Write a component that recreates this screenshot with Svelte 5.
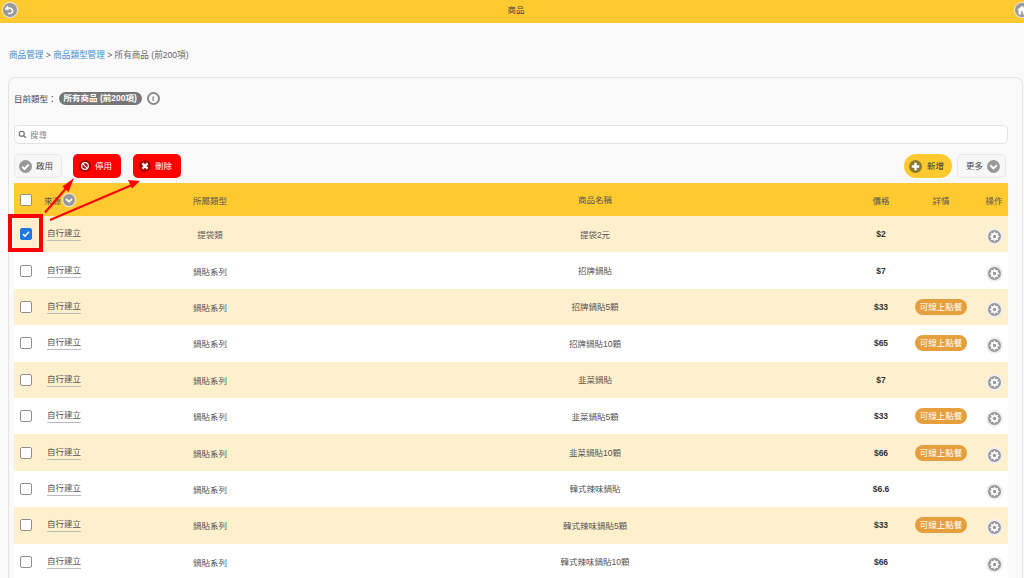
<script>
  const rows = [
    { type: '提袋類', name: '提袋2元', price: '$2', checked: true },
    { type: '鍋貼系列', name: '招牌鍋貼', price: '$7' },
    { type: '鍋貼系列', name: '招牌鍋貼5顆', price: '$33', online: true },
    { type: '鍋貼系列', name: '招牌鍋貼10顆', price: '$65', online: true },
    { type: '鍋貼系列', name: '韭菜鍋貼', price: '$7' },
    { type: '鍋貼系列', name: '韭菜鍋貼5顆', price: '$33', online: true },
    { type: '鍋貼系列', name: '韭菜鍋貼10顆', price: '$66', online: true },
    { type: '鍋貼系列', name: '韓式辣味鍋貼', price: '$6.6' },
    { type: '鍋貼系列', name: '韓式辣味鍋貼5顆', price: '$33', online: true },
    { type: '鍋貼系列', name: '韓式辣味鍋貼10顆', price: '$66' }
  ];
</script>

<div class="page">
  <header class="topbar">
    <button class="nav" aria-label="返回">
      <svg viewBox="0 0 16 16"><path d="M5.4 3.8 3.4 6.6l3 1.2M3.8 6.5c3-1.5 7-.6 7.2 2.4.2 2.5-2.4 3.6-5 2.8" fill="none" stroke="#fff" stroke-width="1.8" /></svg>
    </button>
    <span class="title">商品</span>
    <button class="nav" aria-label="首頁">
      <svg viewBox="0 0 16 16"><path d="M8 3 2.5 8H4v5h3V9.5h2V13h3V8h1.5z" fill="#fff" /></svg>
    </button>
  </header>

  <nav class="crumbs">
    <a href="#a">商品管理</a> &gt; <a href="#b">商品類型管理</a> &gt; 所有商品 (前200項)
  </nav>

  <main class="card">
    <div class="current">
      目前類型：<span class="pill">所有商品 (前200項)</span>
      <span class="info">i</span>
    </div>

    <div class="search">
      <svg viewBox="0 0 12 12"><circle cx="5" cy="5" r="3.4" fill="none" stroke="#666" stroke-width="1.4" /><path d="m7.6 7.6 3 3" stroke="#666" stroke-width="1.6" /></svg>
      <span class="hint">搜尋</span>
    </div>

    <div class="toolbar">
      <button class="btn plain">
        <span class="dot grey"><svg viewBox="0 0 12 12"><path d="m3 6.2 2.1 2.1L9 4.2" fill="none" stroke="#fff" stroke-width="1.8" /></svg></span>
        <span class="label">啟用</span>
      </button>
      <button class="btn red">
        <span class="dot dark"><svg viewBox="0 0 12 12"><circle cx="6" cy="6" r="3.3" fill="none" stroke="#fff" stroke-width="1.2" /><path d="m3.8 3.8 4.4 4.4" stroke="#fff" stroke-width="1.2" /></svg></span>
        <span class="label">停用</span>
      </button>
      <button class="btn red">
        <span class="dot dark"><svg viewBox="0 0 12 12"><path d="m3.4 3.4 5.2 5.2m0-5.2-5.2 5.2" stroke="#fff" stroke-width="2.2" /></svg></span>
        <span class="label">刪除</span>
      </button>
      <span class="spacer"></span>
      <button class="btn add">
        <span class="dot olive"><svg viewBox="0 0 12 12"><path d="M6 2.5v7M2.5 6h7" stroke="#fff" stroke-width="2.2" /></svg></span>
        <span class="label">新增</span>
      </button>
      <button class="btn plain more">
        <span class="label">更多</span>
        <span class="dot grey"><svg viewBox="0 0 12 12"><path d="m3 4.8 3 3 3-3" fill="none" stroke="#fff" stroke-width="1.8" /></svg></span>
      </button>
    </div>

    <div class="table">
      <div class="row head">
        <span class="cell"><span class="check"></span></span>
        <span class="source">來源 <span class="dot grey ring"><svg viewBox="0 0 12 12"><path d="m3 4.8 3 3 3-3" fill="none" stroke="#fff" stroke-width="1.8" /></svg></span></span>
        <span class="cell">所屬類型</span>
        <span class="cell name">商品名稱</span>
        <span class="cell">價格</span>
        <span class="cell">詳情</span>
        <span class="cell">操作</span>
      </div>
      {#each rows as row, i}
        <div class="row" class:odd={i % 2 === 0}>
          <span class="cell">
            {#if row.checked}
              <span class="check on"><svg viewBox="0 0 12 12"><path d="m2.4 6.2 2.4 2.4 4.8-5.2" fill="none" stroke="#fff" stroke-width="1.9" /></svg></span>
            {:else}
              <span class="check"></span>
            {/if}
          </span>
          <span class="source"><span class="link">自行建立</span></span>
          <span class="cell">{row.type}</span>
          <span class="cell name">{row.name}</span>
          <span class="cell price">{row.price}</span>
          <span class="cell">
            {#if row.online}<span class="tag">可線上點餐</span>{/if}
          </span>
          <span class="cell">
            <span class="gear">
              <svg viewBox="0 0 14 14"><circle cx="7" cy="7" r="2.8" fill="none" stroke="#fff" stroke-width="1.8" /><path d="M7 2v2M7 10v2M2 7h2M10 7h2M3.5 3.5l1.4 1.4M9.1 9.1l1.4 1.4M10.5 3.5 9.1 4.9M4.9 9.1l-1.4 1.4" stroke="#fff" stroke-width="1.5" /></svg>
            </span>
          </span>
        </div>
      {/each}
    </div>
  </main>

  <!-- red annotation drawn over the screenshot -->
  <svg class="notes" viewBox="0 0 1024 578">
    <rect x="10" y="216" width="31" height="34" fill="none" stroke="#f00" stroke-width="4" />
    <path d="M45 212.5 68 186" stroke="#f00" stroke-width="2" />
    <path d="M74 178 62.5 186.5 68.5 192z" fill="#f00" />
    <path d="M50 220 132 185" stroke="#f00" stroke-width="2" />
    <path d="M140 181 128 180 132 188.5z" fill="#f00" />
  </svg>
</div>

<style>
  :global(body) {
    margin: 0;
    overflow: hidden;
    background: #f9f9f9;
    font-family: 'Liberation Sans', 'Noto Sans CJK TC', sans-serif;
    font-size: 8.5px;
    color: #555;
  }

  .page {
    position: relative;
    height: 578px;
    overflow: hidden;
  }

  svg {
    display: block;
  }

  .topbar {
    height: 23px;
    background: #ffca30;
    display: flex;
    align-items: flex-start;
    justify-content: space-between;
    padding: 3px 0 0 3px;
    margin-right: -5px;
    box-sizing: border-box;
  }

  .title {
    color: #444;
    line-height: 14px;
  }

  .nav {
    padding: 0;
    border: 0;
    width: 14px;
    height: 14px;
    border-radius: 50%;
    background: #999;
    box-shadow: 0 0 0 1px #e4e4e4;
  }

  .crumbs {
    padding: 26px 0 0 9px;
    line-height: 12px;
    font-size: 8.6px;
    color: #666;
  }

  .crumbs a {
    color: #3d8fd1;
    text-decoration: none;
  }

  .card {
    margin: 16px 1px 0 8px;
    padding: 13px 14px 0 5px;
    height: 520px;
    box-sizing: border-box;
    background: #f9f9f9;
    border: 1px solid #e3e3e3;
    border-bottom: 0;
    border-radius: 7px 7px 0 0;
  }

  .current {
    display: flex;
    align-items: center;
    height: 14px;
    color: #444;
  }

  .pill {
    margin-left: 2px;
    padding: 0 5px;
    height: 13px;
    line-height: 13px;
    border-radius: 7px;
    background: #777;
    color: #fff;
    font-weight: bold;
  }

  .info {
    margin: 1px 0 0 5px;
    width: 9px;
    height: 9px;
    border: 2px solid #888;
    border-radius: 50%;
    background: #fff;
    color: #777;
    font-size: 8px;
    font-weight: bold;
    line-height: 9px;
    text-align: center;
  }

  .search {
    margin-top: 20px;
    height: 19px;
    display: flex;
    align-items: center;
    gap: 3px;
    padding-left: 3px;
    box-sizing: border-box;
    background: #fff;
    border: 1px solid #e2e2e2;
    border-radius: 5px;
    color: #888;
  }

  .search svg {
    width: 9px;
    height: 9px;
  }

  .hint,
  .label {
    margin-top: -2px;
  }

  .toolbar {
    display: flex;
    align-items: center;
    margin-top: 10px;
    padding-right: 2px;
    height: 24px;
  }

  .spacer {
    flex: 1;
  }

  .btn {
    display: flex;
    align-items: center;
    height: 24px;
    padding: 0;
    font: inherit;
    box-sizing: border-box;
    border-radius: 5px;
    border: 1px solid transparent;
  }

  .plain {
    width: 48px;
    padding-left: 4px;
    gap: 4px;
    background: #f7f7f7;
    border-color: #e8e8e8;
    color: #444;
  }

  .plain .dot {
    width: 13px;
    height: 13px;
  }

  .more {
    width: 49px;
    margin-left: 5px;
    padding-left: 8px;
    gap: 4px;
  }

  .red {
    width: 48px;
    margin-left: 11px;
    padding-left: 5px;
    gap: 4px;
    background: #f00;
    color: #fff;
  }

  .red + .red {
    margin-left: 12px;
  }

  .add {
    width: 48px;
    padding-left: 4px;
    gap: 5px;
    background: #ffca30;
    border-radius: 12px;
    color: #333;
  }

  .add .dot {
    width: 13px;
    height: 13px;
  }

  .dot {
    display: inline-block;
    flex: none;
    width: 12px;
    height: 12px;
    border-radius: 50%;
  }

  .grey {
    background: #999;
  }

  .dark {
    background: #a50000;
  }

  .olive {
    background: #8a7a2e;
  }

  .ring {
    box-shadow: 0 0 0 1px #eee;
    margin-left: 2px;
  }

  .table {
    margin-top: 5px;
    width: 994px;
  }

  .row {
    display: grid;
    grid-template-columns: 26px 54px 232px 534px 42px 78px 28px;
    align-items: center;
    height: 36.4px;
    background: #fff;
  }

  .row.odd {
    background: #fff0cd;
  }

  .row.head {
    height: 33px;
    background: #ffca30;
  }

  .cell {
    display: flex;
    justify-content: center;
    align-items: center;
  }

  .name {
    padding-left: 4px;
    margin-top: -1px;
  }

  .source {
    display: flex;
    align-items: center;
    padding-left: 4px;
  }

  .link {
    margin: -1px 0 0 3px;
    padding-bottom: 2px;
    border-bottom: 1px solid #bbb;
  }

  .price {
    font-weight: bold;
    color: #333;
  }

  .tag {
    padding: 0 5px;
    height: 16px;
    line-height: 16px;
    border-radius: 8px;
    background: #e5a03d;
    color: #fff;
  }

  .check {
    width: 12px;
    height: 12px;
    margin-right: 2px;
    box-sizing: border-box;
    background: #fff;
    border: 1px solid #8f8f8f;
    border-radius: 2px;
  }

  .check.on {
    background: #1f76e0;
    border-color: #1f76e0;
  }

  .gear {
    margin-top: 5px;
    width: 13px;
    height: 13px;
    border-radius: 50%;
    background: #999;
    box-shadow: 0 0 0 2px #eee;
  }

  .notes {
    position: absolute;
    inset: 0;
    width: 1024px;
    height: 578px;
    pointer-events: none;
  }
</style>
